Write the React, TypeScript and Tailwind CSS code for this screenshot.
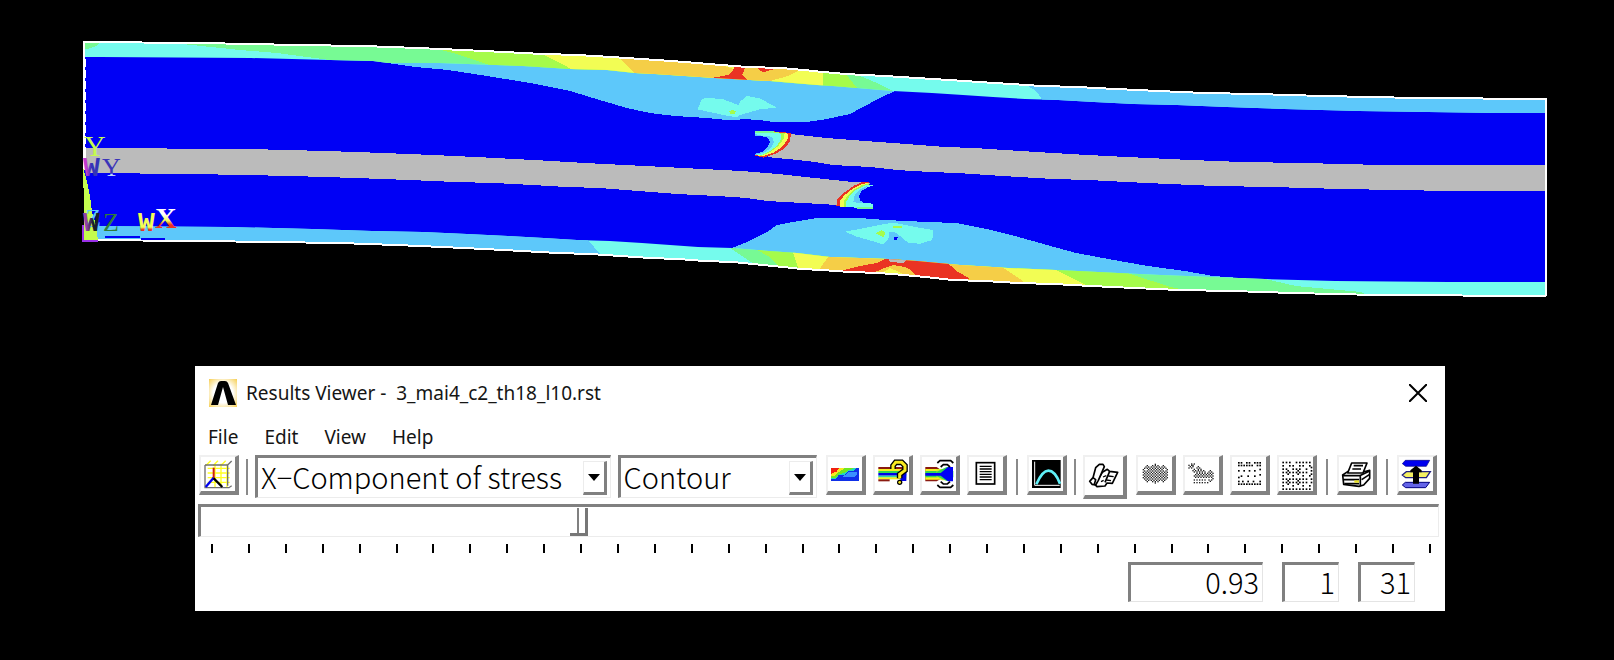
import React from "react";

const C = {
  blue: "#0000f5",
  sky: "#5dc8fa",
  cyan: "#75fbed",
  green: "#77fa94",
  lime: "#a5fb4b",
  yellow: "#f2fd54",
  orange: "#f5ce47",
  red: "#ea3323",
  gray: "#bbbbbb",
};

const topEdge =
  "83,42 201,43 298,45 363,46 418,48 463,50 504,52 543,54 578,55 611,57 641,59 671,61 697,63 721,65 748,67 781,68 804,70 823,72 845,74 864,75 885,76 917,78 949,80 979,82 1011,84 1042,86 1077,87 1116,89 1158,91 1204,93 1256,94 1323,96 1418,98 1546,99";
const bottomEdge =
  "1546,296 1377,295 1293,293 1232,291 1179,290 1134,288 1091,286 1053,284 1018,283 984,281 952,280 925,277 904,275 879,273 850,272 822,270 802,269 783,267 763,265 733,262 705,261 678,259 650,258 621,256 590,254 558,253 522,251 484,249 442,247 396,245 340,243 269,242 200,241 83,240";
const upperStripBase =
  "1546,113 1497,113 1359,111 1284,109 1227,107 1177,105 1134,104 1094,102 1058,100 1025,99 993,97 963,95 932,93 893,91 857,88 833,86 817,85 793,83 770,81 750,80 715,78 685,76 655,74 635,73 607,70 570,69 523,66 439,63 388,63 373,61 330,60 251,58 100,57 84,57";
const lowerStripTop =
  "84,226 228,227 312,229 372,231 423,232 467,234 508,236 544,238 577,240 610,241 642,243 670,245 698,247 732,248 757,250 797,253 830,257 860,258 888,259 917,261 960,265 977,266 1008,268 1078,271 1118,273 1161,275 1213,277 1265,279 1335,281 1448,282 1546,282";

function StressPlot() {
  return (
    <svg
      viewBox="0 0 1614 330"
      className="block w-full"
      shapeRendering="crispEdges"
      role="img"
      aria-label="X-component of stress contour plot"
    >
      <defs>
        <clipPath id="upperStrip">
          <polygon points={`${topEdge} ${upperStripBase}`} />
        </clipPath>
        <clipPath id="lowerStrip">
          <polygon points={`${lowerStripTop} ${bottomEdge}`} />
        </clipPath>
        <linearGradient id="wyInk" x1="0" y1="0" x2="0" y2="1">
          <stop offset="70%" stopColor="#3a34b8" />
          <stop offset="74%" stopColor="#b8d8ff" />
        </linearGradient>
        <linearGradient id="wInk" x1="0" y1="0" x2="1" y2="0">
          <stop offset="20%" stopColor="#c43ad0" />
          <stop offset="50%" stopColor="#3434b8" />
        </linearGradient>
        <linearGradient id="wzInk" x1="0" y1="0" x2="1" y2="0">
          <stop offset="20%" stopColor="#9440a8" />
          <stop offset="60%" stopColor="#182028" />
        </linearGradient>
        <linearGradient id="wxInk" x1="0" y1="0" x2="0" y2="1">
          <stop offset="62%" stopColor={C.yellow} />
          <stop offset="70%" stopColor={C.red} />
        </linearGradient>
        <linearGradient id="xInk" x1="0" y1="0" x2="0" y2="1">
          <stop offset="40%" stopColor="#fff" />
          <stop offset="60%" stopColor={C.yellow} />
          <stop offset="72%" stopColor={C.red} />
        </linearGradient>
      </defs>

      <polygon points={`${topEdge} ${bottomEdge}`} fill={C.blue} />

      {/* bulges */}
      <polygon
        fill={C.sky}
        points="388,63 415,67 448,70 487,76 530,83 570,91 580,94 603,101 627,108 650,113 675,116 707,118 727,120 739,120 741,119 760,120 773,122 807,122 827,119 850,114 863,107 880,98 895,91 817,80 607,65 439,60"
      />
      <polygon
        fill={C.sky}
        points="732,248 747,242 767,232 777,225 793,222 817,218 860,218 885,220 927,222 956,223 987,229 1015,236 1047,245 1076,253 1114,260 1148,266 1185,271 1213,276 1265,280 1160,280 960,268 830,260"
      />

      {/* upper strip */}
      <g clipPath="url(#upperStrip)">
        <rect x="80" y="30" width="1470" height="100" fill={C.cyan} />
        <polygon fill={C.green} points="84,43 100,43 96,46 88,49 84,49" />
        <polygon fill={C.green} points="173,43 240,50 277,53 330,60 373,70 857,100 893,91 877,83 853,73 560,20 173,40" />
        <polygon fill={C.lime} points="437,49 457,54 492,66 500,75 855,95 857,88 845,73 845,40 437,40" />
        <polygon fill={C.yellow} points="540,53 560,63 575,71 575,85 823,90 823,40 540,40" />
        <polygon fill={C.orange} points="618,57 635,73 640,85 770,85 770,81 788,76 800,70 800,55 618,50" />
        <polygon fill={C.yellow} points="722,65 736,66 733,69" />
        <polygon fill={C.red} points="735,66 746,66 742,75 750,82 728,82 706,79 728,75 733,70" />
        <polygon fill={C.red} points="758,68 778,68 764,72 760,71" />
        <polygon fill={C.sky} points="1026,80 1028,86 1036,91 1044,102 1044,120 1550,120 1550,80" />
      </g>

      {/* lower strip */}
      <g clipPath="url(#lowerStrip)">
        <rect x="80" y="220" width="1470" height="80" fill={C.cyan} />
        <polygon fill={C.sky} points="80,220 586,220 588,240 601,255 80,260" />
        <polygon fill={C.green} points="730,240 730,248 742,256 757,266 757,290 1100,300 1375,300 1361,292 1296,286 1265,279 1230,262" />
        <polygon fill={C.lime} points="757,240 757,250 768,256 779,266 790,300 1230,300 1171,287 1130,274 1100,250" />
        <polygon fill={C.yellow} points="792,240 793,253 798,267 800,290 1100,300 1084,284 1056,270 1050,250" />
        <polygon fill={C.orange} points="835,240 828,257 819,270 825,290 1023,290 1023,281 1002,267 1000,250" />
        <polygon fill={C.red} points="840,271 860,266 877,263 885,259 890,257 948,257 949,264 958,272 969,278 960,290" />
        <polygon fill={C.orange} points="873,273 882,269 893,265 905,267 911,270 917,277 890,275" />
        <polygon fill={C.yellow} points="882,273 890,268 897,271 905,275 890,275" />
        <polygon fill={C.gray} points="889,259 906,260 904,263 890,262" />
        <polygon fill={C.orange} points="948,264 958,266 960,272" />
      </g>

      {/* unloaded core */}
      <polygon
        fill={C.gray}
        points="86,148 248,149 327,151 384,153 433,155 476,157 514,159 552,161 585,163 645,166 703,169 742,171 778,174 815,178 853,182 870,183 850,192 838,205 803,203 767,201 747,198 717,196 677,194 638,191 600,188 567,187 532,185 495,183 455,182 409,180 356,178 292,176 193,174 86,173"
      />
      <polygon
        fill={C.gray}
        points="790,134 827,138 865,141 907,144 945,147 974,148 1005,150 1037,152 1070,154 1107,156 1148,158 1191,160 1242,162 1303,163 1383,165 1546,165 1546,191 1452,191 1341,189 1271,187 1216,186 1169,184 1126,182 1088,180 1053,179 1019,177 987,175 958,173 930,172 897,170 870,167 833,165 815,162 798,160 767,157 780,148"
      />

      {/* crack tips and local peaks, drawn on a grid three times as fine */}
      <g transform="translate(560 40) scale(0.333333)">
        <path fill={C.red} d="M585 274H640L693 279L690 305L672 327L645 342L610 353L583 346L610 330Z" />
        <path fill={C.yellow} d="M585 276H640L686 281L682 300L665 322L640 338L608 349L590 346L620 320Z" />
        <path fill={C.lime} d="M585 276H640L674 279L670 298L655 318L632 335L605 347L590 345L620 320Z" />
        <path fill={C.cyan} d="M583 278H640L664 281L662 300L650 318L627 335L605 346H583L610 330Z" />
        <path fill={C.sky} d="M583 282L610 288L636 290L642 306L632 325L612 338L583 346L600 320Z" />
        <path fill={C.blue} d="M580 288H600L622 292L630 306L622 322L608 336L580 342Z" />
        <path fill={C.green} d="M585 274H642V280H585Z" />

        <path fill={C.red} d="M928 427L905 427L880 438L850 460L832 478L829 497L860 500L900 460Z" />
        <path fill={C.yellow} d="M925 429L905 432L880 445L855 464L840 482L840 500L880 502L900 460Z" />
        <path fill={C.lime} d="M930 430L905 436L882 449L862 468L852 484V501L880 502L910 460Z" />
        <path fill={C.cyan} d="M945 434L920 434L888 450L868 470L858 486V501L938 506V492L910 485L905 450Z" />
        <path fill={C.sky} d="M920 438L900 448L884 466L880 485L895 490L910 488Z" />
        <path fill={C.blue} d="M945 438L925 441L905 452L897 468L900 482L915 490L945 490Z" />
        <path fill={C.green} d="M892 500H940V507H892Z" />

        <path fill={C.cyan} d="M437 173L490 178L535 195L540 185L560 168L600 175L650 203L600 208L540 225L530 232L505 228L412 208L425 180Z" />
        <path fill={C.lime} d="M508 214L517 209L527 214L524 221H510Z" />
        <path fill={C.cyan} d="M855 575L900 567L970 553L1000 548L1060 560L1120 570L1117 600L1080 611L1045 609L1025 592L1003 575L988 577L985 598L970 613L925 600L890 590Z" />
        <path fill={C.lime} d="M947 580L965 570L977 578L970 592L960 586ZM997 558H1025V563H1000Z" />
        <path fill={C.blue} d="M1002 590H1014L1010 600H1002Z" />
      </g>

      {/* outline */}
      <polyline points={topEdge} fill="none" stroke="#fff" strokeWidth="2" />
      <polyline points={bottomEdge} fill="none" stroke="#fff" strokeWidth="2" />
      <path d="M1546 98V296M84 42V148" stroke="#fff" strokeWidth="2" fill="none" />
      <path d="M84 148V170" stroke="#fff" strokeWidth="3" />
      <path d="M85 59V148" stroke="#fff" strokeWidth="1" strokeDasharray="8 3" />

      {/* coordinate triads */}
      <polygon fill="#c4fc4e" points="83,167 87,182 90,196 92,212 96,225 98,241 83,241" />
      <path d="M83 188V225" stroke="#000" strokeWidth="2" />
      <path d="M83 225V241H98" stroke="#9a30e8" strokeWidth="2" fill="none" />
      <path d="M105 237H140M141 239H165" stroke={C.blue} strokeWidth="2" />
      <g fontFamily="'Liberation Serif', serif" fontSize="30">
        <text x="84" y="156" fill="#c4fc4e">Y</text>
        <text x="155" y="228" fill="url(#xInk)" fontWeight="bold">X</text>
      </g>
      <g fontFamily="'Liberation Serif', serif" fontSize="26">
        <text x="85" y="227" fill={C.sky}>Z</text>
        <text x="102" y="176" fill="url(#wyInk)">Y</text>
        <text x="103" y="231" fill="#2f7d3a">Z</text>
      </g>
      <g fontFamily="'Liberation Mono', monospace" fontSize="28" fontWeight="bold">
        <text x="83" y="176" fill="url(#wInk)">W</text>
        <text x="83" y="231" fill="url(#wzInk)">W</text>
        <text x="138" y="231" fill="url(#wxInk)">W</text>
      </g>
    </svg>
  );
}

function ToolButton({ label, large, children }: { label: string; large?: boolean; children: React.ReactNode }) {
  return (
    <button
      type="button"
      aria-label={label}
      className={
        "shrink-0 border-t-2 border-l-2 border-r-4 border-b-4 border-t-[#f0f0f0] border-l-[#f0f0f0] border-r-[#828282] border-b-[#828282] bg-white " +
        (large ? "mr-[2px] h-[44px] w-[44px]" : "h-10 w-10")
      }
    >
      <svg
        viewBox={large ? "6 6 114 114" : "6 6 102 102"}
        className={large ? "block h-[38px] w-[38px]" : "block h-[34px] w-[34px]"}
      >
        {children}
      </svg>
    </button>
  );
}

function Separator({ spaced }: { spaced?: boolean }) {
  return <div className={"mt-1 h-9 w-[2px] shrink-0 bg-[#8a8a8a] " + (spaced ? "mx-[2px]" : "")} />;
}

function Combo({ label, value, className }: { label: string; value: string; className: string }) {
  return (
    <div
      className={
        "relative flex h-[43px] min-w-0 border-t-[3px] border-l-[3px] border-r border-b border-t-[#808080] border-l-[#808080] border-r-[#ececec] border-b-[#ececec] " +
        className
      }
    >
      <select
        aria-label={label}
        className="w-full appearance-none bg-white pb-[3px] pl-[3px] font-['Noto_Sans_CJK_JP',sans-serif] text-[29px] leading-9 font-light text-black outline-none"
      >
        <option>{value}</option>
      </select>
      <span className="pointer-events-none absolute top-[3px] right-[3px] flex h-[34px] w-6 items-center justify-center border-t border-l border-r-[3px] border-b-[3px] border-t-[#ececec] border-l-[#ececec] border-r-[#808080] border-b-[#808080] bg-white">
        <svg viewBox="0 0 12 7" className="h-[7px] w-3">
          <path d="M0 0H12L6 7Z" />
        </svg>
      </span>
    </div>
  );
}

function Field({ label, value, className }: { label: string; value: string; className: string }) {
  return (
    <input
      aria-label={label}
      defaultValue={value}
      className={
        "h-10 border-t-[3px] border-l-[3px] border-r border-b border-t-[#808080] border-l-[#808080] border-r-[#e4e4e4] border-b-[#e4e4e4] bg-white pr-[3px] pb-[5px] text-right font-['Noto_Sans_CJK_JP',sans-serif] text-[29px] leading-8 font-light text-black outline-none " +
        className
      }
    />
  );
}

type BitmapProps = {
  rows: string[];
  x: number;
  y: number;
  step: number;
  size: number;
  fill: string;
};

function Bitmap({ rows, x, y, step, size, fill }: BitmapProps) {
  return (
    <g fill={fill}>
      {rows.flatMap((row, j) =>
        row.split("").map((c, i) =>
          c === "#" ? <rect key={`${i}-${j}`} x={x + i * step} y={y + j * step} width={size} height={size} /> : null,
        ),
      )}
    </g>
  );
}

const nodeRows = [
  "#.#...#.#...#.#.#",
  ".................",
  "#.#.#.#.#.#...#.#",
  ".................",
  ".................",
  "................#",
  "#...#...#...#....",
  ".................",
  ".................",
  "................#",
  "..#....#....#....",
  "#................",
  ".................",
  ".................",
  "#..#...#...#....#",
  ".................",
  "#.#.#.#.#.#.#.#.#",
];

const elementRows = [
  "#.#.#...#.#.#.#.#.",
  "..................",
  "#...#.#...#.#...#.",
  ".................#",
  "#.#...#.#.#...#...",
  "...#.....#.......#",
  "#.#.#.#.#.#.#.#...",
  "...#.....#.......#",
  "#.....#.....#...#.",
  "..................",
  "#.#.#.#.#.#.#.#..#",
  "...#.....#........",
  "#.#.#.#.#.#.#.#..#",
  "...#.....#........",
  "#.....#.....#...#.",
  "..................",
  "#.#.#.#.#.#.#.#.#.",
];

const volumeRows = [
  ".........#.........",
  "...#...#.#.#...#...",
  "..#.#.#.#.#.#.#.#..",
  ".#.#.#.#.#.#.#.#.#.",
  "#...#.#.#.#.#.#...#",
  ".#.#.#.#.#.#.#.#.#.",
  "#.#.#.#.#.#.#.#.#.#",
  ".#.#.#.#.#.#.#.#.#.",
  "#.#.#.#.#.#.#.#.#.#",
  ".#.#.#.#.#.#.#.#.#.",
  "#.#.#.#.#.#.#.#.#.#",
  ".#.#.#.#.#.#.#.#.#.",
  "..#.#.#.#.#.#.#.#..",
  "...#...#.#.#...#...",
  ".........#.........",
];

const areaRows = [
  "..#.#..............",
  "#.##...............",
  ".#.#...#...........",
  "#.#...#.#..........",
  "....#..#.#.........",
  "...#.#.#.#.#....#..",
  "....#.#.#.#.#..#.#.",
  "......#.#.#.#.#.#.#",
  ".....#.#.#.#.#.#.#.",
  "....#.#.#.#.#.#.#.#",
  ".....#.#.#.#.#.#.#.",
  "..................#",
  "....#.#.#.#.#..#.#.",
  "................#..",
  "....#.#.#.#.#.#....",
];

function Toolbar() {
  return (
    <div className="flex items-start gap-[7px] pr-2 pl-1">
      <ToolButton label="Element solution">
        <g fill="none">
          <path
            d="M20 32L35 17M42 32L57 17M65 32L80 17M26 40H92M26 54H92M26 68H92M26 82H92M48 26V98M66 26V98M84 26V98"
            stroke="#ffff20"
            strokeWidth="4"
          />
          <path d="M18 30H86V92M18 30V98H90L98 92M86 30L98 18" stroke="#707070" strokeWidth="4" />
          <path d="M44 38V70" stroke="#d02010" strokeWidth="6" />
          <path d="M44 68L20 96" stroke="#0000f0" strokeWidth="7" />
          <path d="M44 70L70 96" stroke="#000" strokeWidth="7" />
        </g>
      </ToolButton>
      <Separator />
      <Combo label="Result item" value="X−Component of stress" className="flex-[356]" />
      <Combo label="Plot type" value="Contour" className="mr-[2px] flex-[198]" />
      <ToolButton label="Plot results">
        <g shapeRendering="crispEdges">
          <rect x="16" y="40" width="84" height="38" fill="#1030e8" />
          <path d="M16 40H92L82 48H66L54 60H38L30 72H16Z" fill="#20d8c0" />
          <path d="M16 40H82L68 46L54 54L40 58L30 68H16Z" fill="#70e820" />
          <path d="M16 40H56L44 48L34 54L26 62H16Z" fill="#f8e820" />
          <path d="M16 40H38L32 50L16 56Z" fill="#f02010" />
          <path d="M58 60L70 50H94V60L84 66H48Z" fill="#3a90ff" />
        </g>
      </ToolButton>
      <ToolButton label="Query results">
        <rect x="16" y="36" width="84" height="6" fill="#8b1a10" />
        <rect x="16" y="42" width="84" height="6" fill="#f8f020" />
        <rect x="16" y="48" width="84" height="6" fill="#30d850" />
        <rect x="16" y="54" width="84" height="8" fill="#0000e8" />
        <rect x="16" y="62" width="84" height="6" fill="#30d8a0" />
        <rect x="16" y="67" width="84" height="6" fill="#f8f020" />
        <rect x="16" y="73" width="34" height="6" fill="#8b1a10" />
        <rect x="82" y="50" width="18" height="28" fill="#0000e8" />
        <path d="M60 42V32L68 22H86L96 32V46L80 58V70" fill="none" stroke="#000" strokeWidth="17" />
        <path d="M60 42V32L68 22H86L96 32V46L80 58V70" fill="none" stroke="#f8ea20" strokeWidth="9" />
        <circle cx="80" cy="82" r="8" fill="#000" />
        <circle cx="80" cy="82" r="4" fill="#f8ea20" />
      </ToolButton>
      <ToolButton label="Animate results">
        <path d="M16 36H50L62 44V72L50 79H16Z" fill="#8b1a10" />
        <path d="M16 42H60L72 46V70L60 74H16Z" fill="#f8f020" />
        <path d="M16 48H100V67H16Z" fill="#30d850" />
        <path d="M50 42H98V76H66L50 67Z" fill="#d8f020" />
        <path d="M50 50L80 36H99V78H80L50 64Z" fill="#30d850" />
        <path d="M16 54H62L84 36H99V79H84L62 62H16Z" fill="#0000f5" />
        <path
          d="M52 24L60 17H92L100 24M62 36L70 29H82L90 36M62 80L70 87H82L90 80M52 90L60 97H92L100 90"
          fill="none"
          stroke="#000"
          strokeWidth="5"
        />
      </ToolButton>
      <ToolButton label="List results">
        <rect x="28" y="23" width="55" height="64" fill="#fff" stroke="#000" strokeWidth="5" />
        <path d="M38 34H74M38 42H74M38 50H74M38 58H74M38 66H74M38 74H74" stroke="#000" strokeWidth="4" />
      </ToolButton>
      <Separator spaced />
      <ToolButton label="Time history">
        <rect x="15" y="15" width="86" height="84" fill="#000" />
        <path d="M23 20V91H98" fill="none" stroke="#fff" strokeWidth="3" />
        <path d="M28 88Q46 47 64 47Q84 47 99 86" fill="none" stroke="#60f0f8" strokeWidth="8" />
      </ToolButton>
      <Separator />
      <ToolButton label="Flip plots" large>
        <g fill="#fff" stroke="#000" strokeWidth="5" strokeLinejoin="round">
          <path d="M58 52L73 43L80 49L104 52L88 85L72 84L66 93L42 95L36 89Z" />
          <path d="M49 28H60L64 35L46 76L38 90L27 88L20 79L30 68L38 38Z" />
          <path d="M30 68L38 74L34 88M80 49L66 82" fill="none" />
          <path d="M76 63L92 65M60 66L70 62M70 75L84 77M54 80L62 76" strokeWidth="4" />
        </g>
      </ToolButton>
      <ToolButton label="Volumes">
        <Bitmap rows={volumeRows} x={20} y={26} step={4} size={4} fill="#222" />
      </ToolButton>
      <ToolButton label="Areas">
        <Bitmap rows={areaRows} x={16} y={25} step={4} size={4} fill="#222" />
      </ToolButton>
      <ToolButton label="Nodes">
        <Bitmap rows={nodeRows} x={24} y={21} step={4} size={5} fill="#000" />
      </ToolButton>
      <ToolButton label="Elements">
        <Bitmap rows={elementRows} x={16} y={20} step={5} size={5} fill="#000" />
      </ToolButton>
      <Separator spaced />
      <ToolButton label="Print">
        <g stroke="#000" strokeWidth="5" strokeLinejoin="round">
          <path d="M17 60L32 50H84L98 46V70L80 90L66 94L20 88Z" fill="#fff" />
          <path d="M44 24H90L78 54L32 54Z" fill="#fff" />
          <path d="M50 32H78M46 42H72M18 62H68L98 48M70 64V92M20 74H66M74 74L98 58M22 86H66" fill="none" />
          <rect x="52" y="76" width="14" height="7" fill="#e8e020" stroke="none" />
        </g>
      </ToolButton>
      <Separator spaced />
      <ToolButton label="Capture animation">
        <path d="M25 16H98L88 34H26L16 26Z" fill="#0000f0" stroke="#000080" strokeWidth="2" />
        <path d="M28 50H100L88 68H26L16 60Z" fill="#f4f060" stroke="#202080" strokeWidth="4" />
        <path d="M25 82H98L86 98H26L16 90Z" fill="#6464e8" stroke="#000080" strokeWidth="3" />
        <path d="M57 32L40 46V52H48V86H66V52H74V46Z" fill="#000" />
      </ToolButton>
    </div>
  );
}

function SubstepSlider() {
  const ticks = Array.from({ length: 34 }, (_, i) => i);
  return (
    <div className="mt-[5px] pr-[6px] pl-[3px]">
      <input
        type="range"
        aria-label="Result set"
        min={1}
        max={34}
        defaultValue={11}
        className="block h-[33px] w-full appearance-none border-t-[3px] border-l-[3px] border-r border-b border-t-[#808080] border-l-[#808080] border-r-[#ececec] border-b-[#ececec] bg-white [&::-webkit-slider-thumb]:h-[28px] [&::-webkit-slider-thumb]:w-[18px] [&::-webkit-slider-thumb]:appearance-none [&::-webkit-slider-thumb]:border-r-[3px] [&::-webkit-slider-thumb]:border-b-[3px] [&::-webkit-slider-thumb]:border-r-[#777777] [&::-webkit-slider-thumb]:border-b-[#777777] [&::-webkit-slider-thumb]:bg-[linear-gradient(to_right,transparent_7px,#808080_7px,#808080_9px,transparent_9px)]"
      />
      <div className="mt-[7px] flex justify-between pr-2 pl-[13px]">
        {ticks.map((t) => (
          <span key={t} className="h-[9px] w-[2px] bg-black" />
        ))}
      </div>
    </div>
  );
}

export default function App() {
  return (
    <main className="min-h-screen bg-black pb-12">
      <StressPlot />
      <section className="mt-9 mr-[169px] ml-[195px] bg-white pb-[9px] font-['Noto_Sans',sans-serif] text-[#151515]">
        <header className="flex h-[53px] items-center pr-[18px] pl-[14px]">
          <svg viewBox="0 0 28 28" className="h-7 w-7">
            <defs>
              <radialGradient id="glow" r="0.7">
                <stop offset="50%" stopColor="#fff" />
                <stop offset="100%" stopColor="#f6cf55" />
              </radialGradient>
            </defs>
            <rect width="28" height="28" fill="url(#glow)" />
            <path d="M2 26L9 4Q10 2 12 2H16Q18 2 19 4L27 26H19L14 8L9 26Z" fill="#000" />
          </svg>
          <h1 className="ml-[9px] grow text-[19px] leading-6 whitespace-pre">Results Viewer -  3_mai4_c2_th18_l10.rst</h1>
          <button type="button" aria-label="Close" className="h-[18px] w-[18px]">
            <svg viewBox="0 0 18 18" className="h-[18px] w-[18px]">
              <path d="M0 0L18 18M18 0L0 18" stroke="#000" strokeWidth="2" />
            </svg>
          </button>
        </header>
        <nav className="flex h-9 items-center gap-[26px] pl-[13px] text-[19px] leading-6">
          <button type="button">File</button>
          <button type="button">Edit</button>
          <button type="button">View</button>
          <button type="button">Help</button>
        </nav>
        <Toolbar />
        <SubstepSlider />
        <div className="mt-[9px] flex justify-end gap-[19px] pr-[30px]">
          <Field label="Time" value="0.93" className="w-[135px]" />
          <Field label="Load step" value="1" className="w-[57px]" />
          <Field label="Substep" value="31" className="w-[57px]" />
        </div>
      </section>
    </main>
  );
}
